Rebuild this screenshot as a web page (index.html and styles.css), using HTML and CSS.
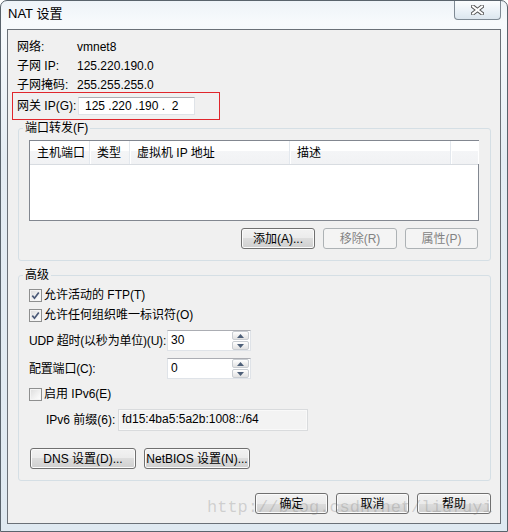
FILE: index.html
```html
<!DOCTYPE html>
<html lang="zh-CN">
<head>
<meta charset="utf-8">
<title>NAT 设置</title>
<link rel="stylesheet" href="styles.css">
</head>
<body>
<div class="window">
  <div class="titlebar">
    <span class="title">NAT 设置</span>
    <div class="close">
      <svg width="13" height="10" viewBox="0 0 13 10"><path d="M2 1.5 L11 8.5 M11 1.5 L2 8.5" stroke="#555" stroke-width="4" stroke-linecap="square"/><path d="M2 1.5 L11 8.5 M11 1.5 L2 8.5" stroke="#fff" stroke-width="2" stroke-linecap="square"/></svg>
    </div>
  </div>
  <div class="client">
    <div class="row"><span class="lbl">网络:</span><span>vmnet8</span></div>
    <div class="row"><span class="lbl">子网 IP:</span><span>125.220.190.0</span></div>
    <div class="row"><span class="lbl">子网掩码:</span><span>255.255.255.0</span></div>
    <div class="gw">
      <span class="gwlbl">网关 IP(G):</span>
      <div class="ipbox">125 .220 .190 .  2</div>
    </div>

    <fieldset class="group fwd">
      <legend>端口转发(F)</legend>
      <div class="list">
        <div class="lhead">
          <div class="col c1">主机端口</div>
          <div class="col c2">类型</div>
          <div class="col c3">虚拟机 IP 地址</div>
          <div class="col c4">描述</div>
          <div class="col c5"></div>
        </div>
      </div>
      <div class="btnrow">
        <button class="btn w74">添加(A)...</button>
        <button class="btn dis w74">移除(R)</button>
        <button class="btn dis w73">属性(P)</button>
      </div>
    </fieldset>

    <fieldset class="group adv">
      <legend>高级</legend>
      <div class="cbrow first"><span class="cb"><svg width="9" height="9" viewBox="0 0 9 9"><path d="M1.3 4.6 L3.5 7.2 L7.8 1.4" fill="none" stroke="#4b5a78" stroke-width="1.7"/></svg></span><span>允许活动的 FTP(T)</span></div>
      <div class="cbrow"><span class="cb"><svg width="9" height="9" viewBox="0 0 9 9"><path d="M1.3 4.6 L3.5 7.2 L7.8 1.4" fill="none" stroke="#4b5a78" stroke-width="1.7"/></svg></span><span>允许任何组织唯一标识符(O)</span></div>
      <div class="frow udp">
        <span class="flbl">UDP 超时(以秒为单位)(U):</span>
        <div class="spin"><span class="sval">30</span><span class="sbtns"><span class="sb"><svg width="7" height="4" viewBox="0 0 7 4"><path d="M0 4 L3.5 0 L7 4Z" fill="#4e6079"/></svg></span><span class="sb"><svg width="7" height="4" viewBox="0 0 7 4"><path d="M0 0 L3.5 4 L7 0Z" fill="#4e6079"/></svg></span></span></div>
      </div>
      <div class="frow port">
        <span class="flbl">配置端口(C):</span>
        <div class="spin"><span class="sval">0</span><span class="sbtns"><span class="sb"><svg width="7" height="4" viewBox="0 0 7 4"><path d="M0 4 L3.5 0 L7 4Z" fill="#4e6079"/></svg></span><span class="sb"><svg width="7" height="4" viewBox="0 0 7 4"><path d="M0 0 L3.5 4 L7 0Z" fill="#4e6079"/></svg></span></span></div>
      </div>
      <div class="cbrow v6"><span class="cb"></span><span>启用 IPv6(E)</span></div>
      <div class="frow pre">
        <span class="plbl">IPv6 前缀(6):</span>
        <div class="prebox">fd15:4ba5:5a2b:1008::/64</div>
      </div>
      <div class="btnrow2">
        <button class="btn w106">DNS 设置(D)...</button>
        <button class="btn w106">NetBIOS 设置(N)...</button>
      </div>
    </fieldset>

    <div class="footer">
      <button class="btn w73">确定</button>
      <button class="btn w73">取消</button>
      <button class="btn w74">帮助</button>
    </div>
  </div>
  <div class="watermark">http://blog.csdn.net/liufuyi</div>
</div>
</body>
</html>
```
FILE: styles.css
```css
* { box-sizing: border-box; }
html, body { margin: 0; padding: 0; }
body {
  width: 508px;
  height: 532px;
  overflow: hidden;
  font-family: "Liberation Sans", "Noto Sans CJK SC", sans-serif;
  font-size: 12px;
  line-height: 16px;
  color: #000;
  background: #fff;
}
.window {
  position: relative;
  width: 508px;
  height: 532px;
  border: 1px solid #59636c;
  border-radius: 7px 7px 0 0;
  background: linear-gradient(180deg, #eef3f8 0%, #f7fafc 4%, #e4ecf3 30%, #dfe9f1 100%);
  display: flex;
  flex-direction: column;
}
.titlebar {
  height: 28px;
  display: flex;
  align-items: flex-start;
  flex: none;
}
.title {
  font-size: 13px;
  line-height: 16px;
  padding: 5px 0 0 7px;
}
.close {
  margin-left: auto;
  margin-right: 6px;
  width: 47px;
  height: 19px;
  border: 1px solid #7f8a94;
  border-top: none;
  border-radius: 0 0 4px 4px;
  background: linear-gradient(180deg, #fbfdfe 0%, #e9f0f6 60%, #dce6ee 100%);
  display: flex;
  align-items: center;
  justify-content: center;
}
.close svg { display: block; }

.client {
  flex: none;
  margin-left: 6px;
  width: 494px;
  border: 1px solid #6a7077;
  background: #f0f0f0;
  padding: 7px 0 9px 0;
}
.row {
  height: 19px;
  display: flex;
  align-items: center;
  padding-left: 9px;
  white-space: nowrap;
}
.lbl { width: 60px; flex: none; }
.gw {
  margin: -2px 0 0 4px;
  width: 208px;
  height: 28px;
  border: 1px solid #e0262c;
  display: flex;
  align-items: center;
  padding-left: 4px;
  white-space: nowrap;
}
.gwlbl { width: 61px; flex: none; }
.ipbox {
  flex: none;
  width: 117px;
  height: 18px;
  line-height: 16px;
  background: #fff;
  border: 1px solid #dfe3e8;
  border-top-color: #abadb3;
  padding-left: 6px;
  white-space: pre;
}

.group {
  margin: 0 9px 0 10px;
  border: 1px solid #d5dfe5;
  border-radius: 3px;
  padding: 0 11px 11px 10px;
  min-width: 0;
}
.group legend {
  margin-left: -6px;
  padding: 0 2px;
  line-height: 16px;
}
.adv { margin-top: 6px; }

.list {
  margin-top: 4px;
  height: 81px;
  border: 1px solid #828790;
  background: #fff;
}
.lhead {
  display: flex;
  height: 24px;
  background: linear-gradient(180deg, #ffffff 0%, #ffffff 45%, #f4f5f7 45%, #f1f2f4 100%);
  border-bottom: 1px solid #d8dce1;
  white-space: nowrap;
}
.col {
  height: 23px;
  display: flex;
  align-items: center;
  padding-left: 7px;
  border-right: 1px solid #e3e8ee;
  box-shadow: 1px 0 0 #fff;
}
.c1 { width: 60px; }
.c2 { width: 40px; }
.c3 { width: 160px; }
.c4 { width: 161px; }
.c5 { flex: 1; border-right: none; }

.btnrow {
  display: flex;
  justify-content: flex-end;
  gap: 8px;
  margin-top: 7px;
  padding-right: 1px;
}
.btn {
  flex: none;
  height: 21px;
  padding: 0;
  font: inherit;
  color: #000;
  white-space: nowrap;
  border: 1px solid #707070;
  border-radius: 3px;
  background: linear-gradient(180deg, #f2f2f2 0%, #ebebeb 50%, #dddddd 50%, #cfcfcf 100%);
  box-shadow: inset 0 0 0 1px #fbfbfb;
  display: flex;
  align-items: center;
  justify-content: center;
}
.btn.dis {
  border-color: #adb2b5;
  background: #f4f4f4;
  color: #838383;
  box-shadow: none;
}
.w73 { width: 73px; }
.w74 { width: 74px; }
.w106 { width: 106px; }

.cbrow {
  height: 20px;
  display: flex;
  align-items: center;
  gap: 2px;
  white-space: nowrap;
}
.cbrow.first { margin-top: 2px; }
.cbrow.v6 { margin-top: 5px; }
.cb {
  flex: none;
  width: 13px;
  height: 13px;
  border: 1px solid #8e8f8f;
  background: linear-gradient(135deg, #dcdcdc 0%, #f6f6f6 70%, #ffffff 100%);
  box-shadow: inset 0 0 0 1px #f4f4f4;
  display: flex;
  align-items: center;
  justify-content: center;
}
.cb svg { display: block; }

.frow {
  display: flex;
  align-items: center;
  white-space: nowrap;
}
.udp { margin-top: 5px; }
.port { margin-top: 7px; }
.flbl { width: 138px; flex: none; letter-spacing: -0.2px; }
.spin {
  flex: none;
  width: 84px;
  height: 21px;
  background: #fff;
  border: 1px solid #dfe3e8;
  border-top-color: #abadb3;
  display: flex;
  align-items: center;
}
.sval { flex: 1; padding-left: 3px; padding-bottom: 2px; }
.sbtns {
  width: 18px;
  height: 19px;
  display: flex;
  flex-direction: column;
  gap: 1px;
  padding: 0 1px 0 0;
}
.sb {
  flex: 1;
  border: 1px solid #c9cdd2;
  border-radius: 2px;
  background: linear-gradient(180deg, #ffffff 0%, #f0f0f0 50%, #e2e2e2 100%);
  display: flex;
  align-items: center;
  justify-content: center;
}
.sb svg { display: block; }

.pre { margin-top: 5px; margin-left: 17px; }
.plbl { width: 72px; flex: none; }
.prebox {
  flex: none;
  width: 190px;
  height: 22px;
  background: #f3f3f3;
  border: 1px solid #d9dbdd;
  box-shadow: inset 0 0 0 1px #f9f9f9;
  padding: 1px 0 0 3px;
}

.btnrow2 {
  display: flex;
  gap: 8px;
  margin-top: 17px;
  margin-left: 1px;
}

.footer {
  display: flex;
  justify-content: flex-end;
  gap: 8px;
  margin-top: 12px;
  padding-right: 9px;
}

.watermark {
  position: absolute;
  left: 206px;
  top: 496px;
  font-family: "Liberation Mono", monospace;
  font-size: 17px;
  line-height: 22px;
  color: rgba(120, 120, 120, 0.28);
  pointer-events: none;
  white-space: nowrap;
}
```
